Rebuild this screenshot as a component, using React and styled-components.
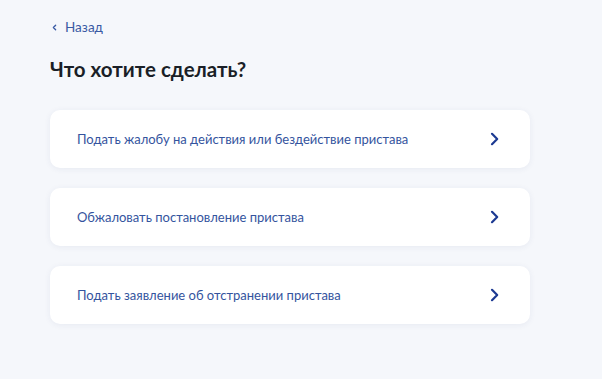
import styled, { createGlobalStyle } from "styled-components";

const GlobalStyle = createGlobalStyle`
  html, body {
    margin: 0;
    padding: 0;
    background: #f5f7fb;
    font-family: Lato, "Noto Sans", sans-serif;
  }
`;

const Page = styled.main`
  width: 602px;
  height: 379px;
  box-sizing: border-box;
  padding: 18px 0 0 50px;
  background: #f5f7fb;
`;

const BackLink = styled.a`
  display: flex;
  align-items: center;
  gap: 6px;
  height: 18px;
  color: #3a5aa4;
  font-size: 13.5px;
  text-decoration: none;
  cursor: pointer;
`;

const Title = styled.h1`
  margin: 20px 0 0;
  font-size: 20.5px;
  font-weight: 700;
  line-height: 26px;
  color: #1a1f27;
`;

const OptionList = styled.div`
  display: flex;
  flex-direction: column;
  gap: 20px;
  width: 480px;
  margin-top: 28px;
`;

const OptionCard = styled.button`
  display: flex;
  align-items: center;
  justify-content: space-between;
  height: 58px;
  padding: 0 27px 0 27px;
  border: none;
  border-radius: 10px;
  background: #fff;
  box-shadow: 0 1px 6px rgba(40, 60, 110, 0.07);
  font-family: inherit;
  font-size: 13px;
  color: #34549e;
  text-align: left;
  cursor: pointer;
`;

const Chevron = ({ dir = "right", size = 16, color, width = 2.2 }) => (
  <svg width={size} height={size} viewBox="0 0 16 16" fill="none">
    <path
      d={dir === "right" ? "M5 2.8 10.2 8 5 13.2" : "M10 4 6 8l4 4"}
      stroke={color}
      strokeWidth={width}
      strokeLinecap="round"
      strokeLinejoin="round"
    />
  </svg>
);

const options = [
  "Подать жалобу на действия или бездействие пристава",
  "Обжаловать постановление пристава",
  "Подать заявление об отстранении пристава",
];

export default function App() {
  return (
    <>
      <GlobalStyle />
      <Page>
        <BackLink>
          <Chevron dir="left" size={9} color="#3a5aa4" width={2.4} />
          Назад
        </BackLink>
        <Title>Что хотите сделать?</Title>
        <OptionList>
          {options.map((text) => (
            <OptionCard key={text}>
              {text}
              <Chevron color="#1c3a92" />
            </OptionCard>
          ))}
        </OptionList>
      </Page>
    </>
  );
}
